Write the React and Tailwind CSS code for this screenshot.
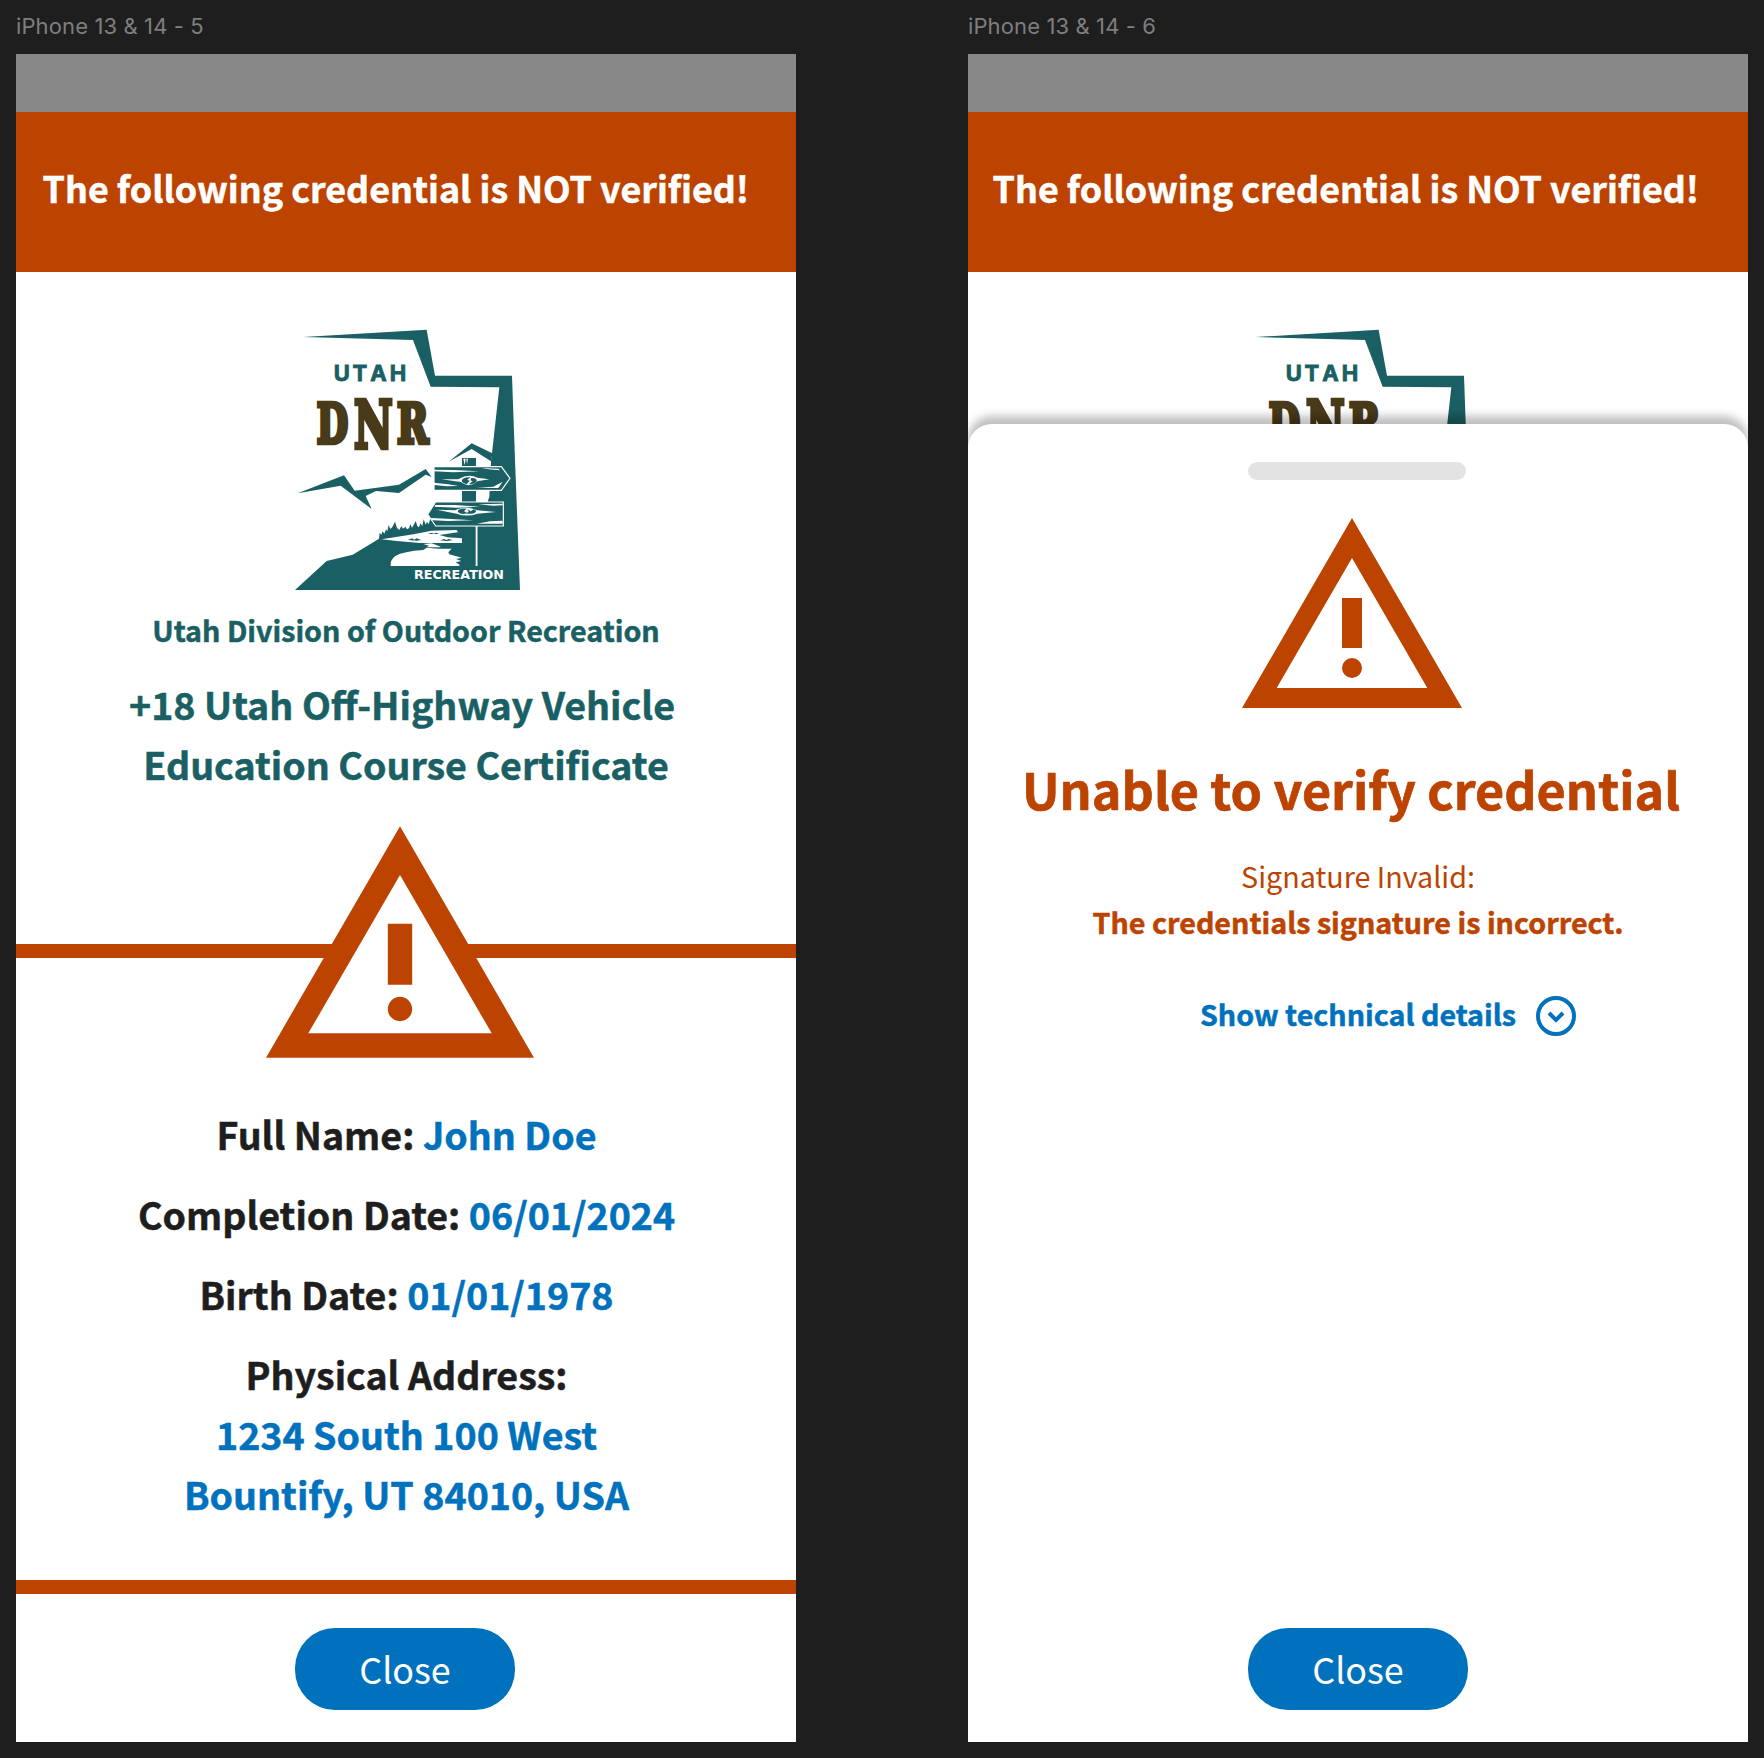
import React from "react";

const SOURCE = "font-['Noto_Sans_CJK_SC','Source_Sans_3',sans-serif]";

function DnrLogo({ className }) {
  return (
    <svg viewBox="0 0 756 870" className={className} role="img" aria-label="Utah DNR Recreation">
      {/* state outline, hillside and tree line */}
      <path
        fill="#1a5f63"
        d="M70 81L440 59L465 197H696L705 450L720 840H45L140 753L218 734L297 686L299 668L304 674L308 664L313 671L318 658L322 664L326 645L331 657L337 651L345 635L351 654L358 660L364 648L369 656L376 650L381 658L387 655L391 643L396 653L401 645L407 633L412 648L417 652L421 640L427 648L431 628L437 644L441 635L446 643L451 626L458 636L470 610L600 610L618 575L626 500L636 430L658 232L452 230L399 90Z"
      />
      {/* mountains */}
      <path
        fill="#1a5f63"
        d="M53 550L192 496L224 542L357 524L437 477L455 501L437 494L357 549L288 543L257 558L275 597L182 527Z"
      />
      {/* kiosk roof, panel and post */}
      <path fill="#fff" d="M515 456L575 417L633 454L628 560L618 590H520Z" />
      <path fill="#1a5f63" d="M506 455L575 400L637 430L633 454L575 417Z" />
      <path fill="#1a5f63" d="M546 444H588V580H546Z" />
      <path fill="#fff" d="M550 446L554 466L557 446ZM559 446L561 462L564 446Z" />
      {/* upper plank */}
      <path fill="#1a5f63" stroke="#fff" strokeWidth="3.5" d="M462 470H664L690 505L664 541H462Z" />
      <path
        fill="#fff"
        d="M462 479L520 480L598 484L520 487L462 484ZM605 474L655 476L660 481L625 478ZM484 508L535 508Q566 490 592 503L628 508L592 514Q566 536 543 516ZM462 518L505 523L535 528L500 529L462 525ZM590 533L640 530L668 515L655 534Z"
      />
      <path
        fill="#1a5f63"
        d="M545 514Q546 501 572 502L562 509L569 512L560 523Q550 522 545 514ZM574 504Q590 503 590 512Q589 522 566 523L578 514L571 511Z"
      />
      {/* lower plank */}
      <path fill="#1a5f63" stroke="#fff" strokeWidth="3.5" d="M467 576H670V648H467L443 613Z" />
      <path
        fill="#fff"
        d="M466 585L525 585L600 590L530 593L464 590ZM595 583L668 581V586L640 587ZM470 599L525 601Q555 585 592 601L648 606L592 611Q560 622 530 611L500 605ZM452 624L500 626L580 631L505 633L458 631ZM590 641L630 634L668 632V641Z"
      />
      <path
        fill="#1a5f63"
        d="M533 604Q536 594 560 596L552 603L562 609L551 612Q537 612 533 604ZM563 597L566 605L558 611Q585 614 589 602L581 598L572 604Z"
      />
      {/* sign pole */}
      <path fill="#fff" d="M587 648H592.5V768H587Z" />
      {/* lake */}
      <path
        fill="#fff"
        d="M305 688L400 673L455 662L530 660L534 667L498 672L478 675L503 682L546 685V699H420L350 693Z"
      />
      <path
        fill="#1a5f63"
        d="M384 690L396 685L403 689L410 685L424 690L410 692ZM443 672L455 668L461 671L468 668L478 672ZM480 691L492 687L499 690L506 687L518 691L500 693Z"
      />
      <path fill="#fff" d="M430 702L455 700L482 710L480 712H440L447 707Z" />
      <path
        fill="#fff"
        d="M332 768Q330 750 346 738Q370 724 430 720L440 713L475 716L515 716L505 727L508 733L545 743L528 747L544 753L527 757L540 765L536 768Z"
      />
      <text
        x="402"
        y="807"
        textLength="270"
        lengthAdjust="spacingAndGlyphs"
        fill="#fff"
        className="font-['DejaVu_Sans',sans-serif] text-[37px] font-bold"
      >
        RECREATION
      </text>
      <text
        x="161 217.5 270.5 329"
        y="211.5"
        fill="#1a5f63"
        stroke="#1a5f63"
        strokeWidth="2.5"
        className="font-['Inter',sans-serif] text-[66px] font-bold"
      >
        UTAH
      </text>
      <text y="400" fill="#493a19" stroke="#493a19" strokeWidth="14" className="font-['DejaVu_Serif',serif] text-[161px] font-bold">
        <tspan x="110" textLength="94" lengthAdjust="spacingAndGlyphs">
          D
        </tspan>
        <tspan x="222" y="413" textLength="116" lengthAdjust="spacingAndGlyphs" className="text-[197px]">
          N
        </tspan>
        <tspan x="351" y="400" textLength="94" lengthAdjust="spacingAndGlyphs">
          R
        </tspan>
      </text>
    </svg>
  );
}

function WarningTriangle({ className }) {
  return (
    <svg viewBox="1 2 22 19" className={className} aria-hidden="true">
      <path fill="#bd4300" d="M12 2L1 21H23Z" />
      <path fill="#fff" d="M12 5.99L19.53 19H4.47Z" />
      <path fill="#bd4300" d="M11 10H13V15H11Z" />
      <circle fill="#bd4300" cx="12" cy="17" r="1" />
    </svg>
  );
}

function Artboard({ title, children }) {
  return (
    <section className="flex w-[780px] flex-col">
      <h2 className="mt-[11px] h-[30px] font-['Inter',sans-serif] text-[22px] leading-[30px] tracking-[0.12px] text-[#7e7e7e]">
        {title}
      </h2>
      <div className="relative mt-[13px] flex h-[1688px] flex-col overflow-hidden bg-white">{children}</div>
    </section>
  );
}

function Header({ className }) {
  return (
    <>
      <div className="h-[58px] shrink-0 bg-[#888888]" />
      <div className={`h-40 shrink-0 bg-[#bd4300] pt-[50.5px] ${className}`}>
        <p className="text-[35.84px] leading-[48px] font-bold whitespace-nowrap text-white [-webkit-text-stroke:0.5px]">
          The following credential is NOT verified!
        </p>
      </div>
    </>
  );
}

function CloseButton({ className }) {
  return (
    <button
      className={`flex h-[82px] w-[220px] shrink-0 items-center justify-center rounded-[40px] bg-[#0071bd] pb-0.5 text-[35.9px] leading-[52px] text-white ${className}`}
    >
      Close
    </button>
  );
}

function Field({ label, value }) {
  return (
    <p>
      {label}: <span className="text-[#0071bd]">{value}</span>
    </p>
  );
}

export default function App() {
  return (
    <main className={`flex h-[1758px] w-[1764px] justify-between overflow-hidden bg-[#1e1e1e] px-4 ${SOURCE}`}>
      <Artboard title="iPhone 13 & 14 - 5">
        <Header className="pl-[26.6px]" />
        <DnrLogo className="mt-[38px] h-[290px] w-[252px] shrink-0 self-center" />
        <h3 className="mt-2.5 text-center text-[28.65px] leading-10 font-bold text-[#1a5f63] [-webkit-text-stroke:0.5px]">
          Utah Division of Outdoor Recreation
        </h3>
        <h1 className="mt-6 text-center text-[37.6px] leading-[60px] font-bold text-[#1a5f63] [-webkit-text-stroke:0.5px]">
          <span className="block pr-2">+18 Utah Off-Highway Vehicle</span>
          <span className="block">Education Course Certificate</span>
        </h1>
        <div className="relative mt-[150px] h-3.5 shrink-0 bg-[#bd4300]">
          <WarningTriangle className="absolute top-[-118px] left-[250px] h-[232px] w-[268px]" />
        </div>
        <div className="mt-[146px] flex flex-col gap-5 pl-px text-center text-[37.55px] leading-[60px] font-bold text-[#1e1e1e] [-webkit-text-stroke:0.5px]">
          <Field label="Full Name" value="John Doe" />
          <Field label="Completion Date" value="06/01/2024" />
          <Field label="Birth Date" value="01/01/1978" />
          <p>
            Physical Address:
            <span className="block text-[#0071bd]">1234 South 100 West</span>
            <span className="block text-[#0071bd]">Bountify, UT 84010, USA</span>
          </p>
        </div>
        <div className="mt-14 h-3.5 shrink-0 bg-[#bd4300]" />
        <CloseButton className="mt-[34px] ml-[279px]" />
      </Artboard>

      <Artboard title="iPhone 13 & 14 - 6">
        <Header className="pl-[24.6px]" />
        <DnrLogo className="mt-[38px] h-[290px] w-[252px] shrink-0 self-center" />
        <div className="absolute inset-x-0 top-[370px] bottom-0 flex flex-col rounded-t-3xl bg-white shadow-[0_-8px_8px_rgba(0,0,0,0.25)]">
          <div className="mt-[38px] ml-[280px] h-[18px] w-[218px] rounded-full bg-[#e3e3e3]" />
          <WarningTriangle className="mt-[38px] ml-[274px] h-[190px] w-[220px]" />
          <h1 className="mt-12 pr-3.5 text-center text-[50.25px] leading-[64px] font-bold text-[#bd4300] [-webkit-text-stroke:0.7px]">
            Unable to verify credential
          </h1>
          <div className="mt-[33px] text-center text-[28.7px] leading-[46px] text-[#bd4300]">
            <p>Signature Invalid:</p>
            <p className="font-bold [-webkit-text-stroke:0.5px]">The credentials signature is incorrect.</p>
          </div>
          <button className="mt-[49px] ml-[232px] flex w-fit items-start gap-5 text-[28.65px] leading-10 font-bold text-[#0071bd] [-webkit-text-stroke:0.5px]">
            Show technical details
            <svg viewBox="0 0 40 40" className="mt-0.5 size-10" fill="none" stroke="currentColor" strokeWidth="4">
              <circle cx="20" cy="20" r="18" />
              <path d="M13 17L20 24L27 17" />
            </svg>
          </button>
          <CloseButton className="mt-auto mb-8 self-center" />
        </div>
      </Artboard>
    </main>
  );
}
